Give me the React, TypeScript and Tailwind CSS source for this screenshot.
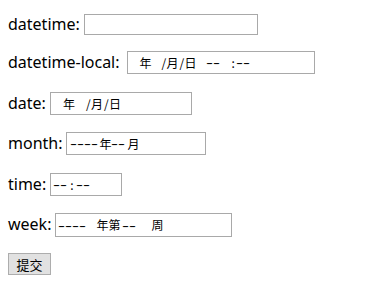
import React from 'react';

const cjk = "font-['Noto_Sans_CJK_SC',sans-serif]";

// a run of placeholder dashes, widened to look like the old IE field glyphs
const Dashes = ({ n, w }: { n: number; w: string }) => (
  <span className={`inline-block ${w} overflow-visible`}>
    <span className="inline-block origin-left scale-x-[1.75] font-['Liberation_Sans',sans-serif]">
      {'-'.repeat(n)}
    </span>
  </span>
);

const Seg = ({ w, children }: { w: string; children: React.ReactNode }) => (
  <span className={`inline-block ${w}`}>{children}</span>
);

const Field = ({ className, children }: { className: string; children?: React.ReactNode }) => (
  <div
    className={`flex items-center border border-[#a9a9a9] bg-white text-[12px] leading-none text-black whitespace-nowrap ${cjk} ${className}`}
  >
    {children}
  </div>
);

const Row = ({ label, className, children }: { label: string; className: string; children: React.ReactNode }) => (
  <div className={`flex items-center gap-[4px] ${className}`}>
    <span className="text-[16px] leading-[20px] -translate-y-[1px]">{label}</span>
    {children}
  </div>
);

export default function App() {
  return (
    <div className="h-[298px] w-[373px] bg-white px-2 text-black font-['Noto_Sans',sans-serif]">
      <div className="flex flex-col">
        <Row label="datetime:" className="pt-[14px]">
          <Field className="h-[21px] w-[174px]" />
        </Row>

        <Row label="datetime-local:" className="mt-[16px]">
          <Field className="ml-[3px] h-[23px] w-[188px] pl-[12px]">
            <Seg w="w-[22px]">年</Seg>
            <Seg w="w-[5px]">/</Seg>
            <Seg w="w-[13px]">月</Seg>
            <Seg w="w-[5px]">/</Seg>
            <Seg w="w-[21px]">日</Seg>
            <Dashes n={2} w="w-[26px]" />
            <Seg w="w-[4px]">:</Seg>
            <Dashes n={2} w="w-[14px]" />
          </Field>
        </Row>

        <Row label="date:" className="mt-[18px]">
          <Field className="h-[23px] w-[142px] pl-[12px]">
            <Seg w="w-[23px]">年</Seg>
            <Seg w="w-[5px]">/</Seg>
            <Seg w="w-[13px]">月</Seg>
            <Seg w="w-[5px]">/</Seg>
            <Seg w="w-[12px]">日</Seg>
          </Field>
        </Row>

        <Row label="month:" className="mt-[17px]">
          <Field className="h-[23px] w-[140px] pl-[3px]">
            <Dashes n={4} w="w-[29px]" />
            <Seg w="w-[12px]">年</Seg>
            <Dashes n={2} w="w-[16px]" />
            <Seg w="w-[12px]">月</Seg>
          </Field>
        </Row>

        <Row label="time:" className="mt-[18px]">
          <Field className="h-[23px] w-[72px] pl-[2px]">
            <Dashes n={2} w="w-[17px]" />
            <Seg w="w-[6px]">:</Seg>
            <Dashes n={2} w="w-[14px]" />
          </Field>
        </Row>

        <Row label="week:" className="mt-[17px]">
          <Field className="h-[24px] w-[177px] pl-[2px]">
            <Dashes n={4} w="w-[38px]" />
            <Seg w="w-[12px]">年</Seg>
            <Seg w="w-[14px]">第</Seg>
            <Dashes n={2} w="w-[29px]" />
            <Seg w="w-[12px]">周</Seg>
          </Field>
        </Row>

        <div className="mt-[16px]">
          <button
            type="button"
            className={`flex h-[22px] w-[43px] items-center justify-center border border-[#adadad] bg-[#e1e1e1] text-[13px] leading-none text-black ${cjk}`}
          >
            提交
          </button>
        </div>
      </div>
    </div>
  );
}
